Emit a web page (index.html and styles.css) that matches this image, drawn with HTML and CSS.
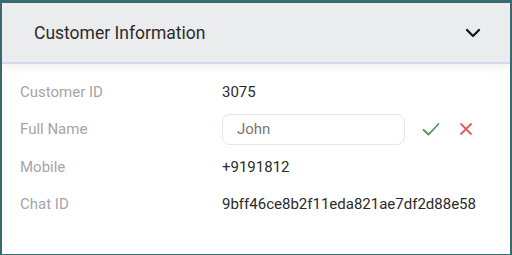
FILE: index.html
```html
<!DOCTYPE html>
<html lang="en">
<head>
  <meta charset="UTF-8">
  <meta name="viewport" content="width=device-width, initial-scale=1.0">
  <title>Customer Information</title>
  <link rel="stylesheet" href="styles.css">
</head>
<body>
  <div class="panel">
    <div class="panel-header">
      <h2>Customer Information</h2>
      <svg class="chevron" width="16" height="10" viewBox="0 0 16 10">
        <path d="M2 2 L8 8 L14 2" fill="none" stroke="#111" stroke-width="2.2" stroke-linecap="round" stroke-linejoin="round"/>
      </svg>
    </div>
    <div class="panel-body">
      <div class="row">
        <span class="label">Customer ID</span>
        <span class="value">3075</span>
      </div>
      <div class="row edit">
        <span class="label">Full Name</span>
        <input type="text" class="name-input" value="John">
        <button class="icon-btn" title="Save">
          <svg width="20" height="16" viewBox="0 0 20 16">
            <path d="M2 8.5 L7.5 13.5 L18 2.5" fill="none" stroke="#4c9a52" stroke-width="1.8"/>
          </svg>
        </button>
        <button class="icon-btn" title="Cancel">
          <svg width="14" height="14" viewBox="0 0 14 14">
            <path d="M1.5 1.5 L12.5 12.5 M12.5 1.5 L1.5 12.5" fill="none" stroke="#e05a5a" stroke-width="1.8"/>
          </svg>
        </button>
      </div>
      <div class="row">
        <span class="label">Mobile</span>
        <span class="value">+9191812</span>
      </div>
      <div class="row">
        <span class="label">Chat ID</span>
        <span class="value">9bff46ce8b2f11eda821ae7df2d88e58</span>
      </div>
    </div>
  </div>
</body>
</html>
```

FILE: styles.css
```css
html, body {
  margin: 0;
  height: 100%;
}
body {
  font-family: Roboto, "Noto Sans", sans-serif;
  background-color: #3b6a6e;
  padding: 2px;
  box-sizing: border-box;
}
.panel {
  background-color: white;
  height: 100%;
  box-sizing: border-box;
}
.panel-header {
  display: flex;
  align-items: center;
  justify-content: space-between;
  height: 59px;
  padding: 0 29px 0 32px;
  margin-top: 1px;
  background-color: #ebecee;
  border-bottom: 2px solid #d6d9ec;
  box-shadow: 0 4px 8px rgba(0, 0, 0, 0.06);
}
.panel-header h2 {
  margin: 0;
  font-size: 17.5px;
  font-weight: 400;
  color: #2b2b2b;
}
.chevron {
  display: block;
}
.panel-body {
  padding: 9px 18px 0 18px;
}
.row {
  display: flex;
  align-items: center;
  height: 37px;
  font-size: 15px;
}
.row.edit {
  height: 38px;
}
.label {
  width: 202px;
  color: #a5a5a5;
}
.value {
  color: #2b2b2b;
}
.name-input {
  width: 183px;
  height: 31px;
  box-sizing: border-box;
  border: 1px solid #e3e3f6;
  border-radius: 8px;
  padding: 0 14px;
  font-family: inherit;
  font-size: 15px;
  color: #777;
  outline: none;
}
.icon-btn {
  background: none;
  border: none;
  padding: 0;
  margin-left: 16px;
  display: flex;
  align-items: center;
  cursor: pointer;
}
.icon-btn + .icon-btn {
  margin-left: 18px;
}
```
